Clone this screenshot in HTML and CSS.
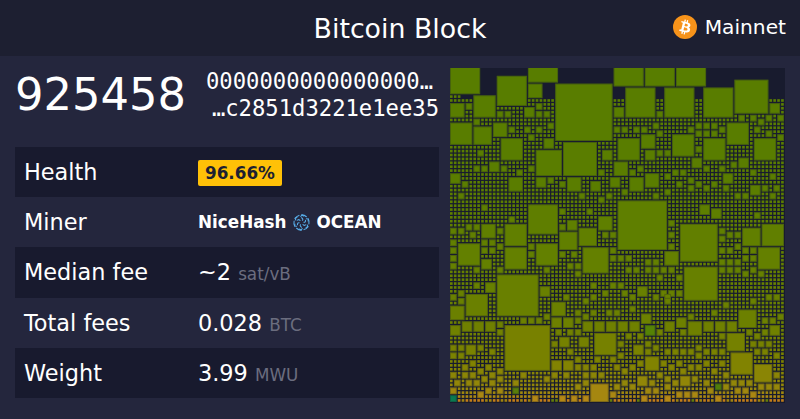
FILE: index.html
```html
<!DOCTYPE html>
<html lang="en">
<head>
<meta charset="utf-8">
<title>Bitcoin Block</title>
<link rel="stylesheet" href="styles.css">
</head>
<body>
<header class="top">
  <h1 class="title">Bitcoin Block</h1>
  <div class="network">
    <svg class="coin" viewBox="0 0 32 32" aria-hidden="true">
      <circle cx="16" cy="16" r="16" fill="#f7931a"/>
      <path fill="#fff" d="M23.189 14.02c.314-2.096-1.283-3.223-3.465-3.975l.708-2.84-1.728-.43-.69 2.765c-.454-.114-.92-.22-1.385-.326l.695-2.783L15.596 6l-.708 2.839c-.376-.086-.746-.17-1.104-.26l.002-.009-2.384-.595-.46 1.846s1.283.294 1.256.312c.7.175.826.638.805 1.006l-.806 3.235c.048.012.11.03.18.057l-.183-.045-1.13 4.532c-.086.212-.303.531-.793.41.018.025-1.256-.313-1.256-.313l-.858 1.978 2.25.561c.418.105.828.215 1.231.318l-.715 2.872 1.727.43.708-2.84c.472.127.93.245 1.378.357l-.706 2.828 1.728.43.715-2.866c2.948.558 5.164.333 6.097-2.333.752-2.146-.037-3.385-1.588-4.192 1.13-.26 1.98-1.003 2.207-2.538zm-3.95 5.538c-.533 2.147-4.148.986-5.32.695l.95-3.805c1.172.293 4.929.872 4.37 3.11zm.535-5.569c-.487 1.953-3.495.96-4.47.717l.86-3.45c.975.243 4.118.696 3.61 2.733z"/>
    </svg>
    <span>Mainnet</span>
  </div>
</header>
<main class="content">
  <section class="info">
    <div class="summary">
      <div class="height">925458</div>
      <div class="hash">
        <div class="hash-start">0000000000000000…</div>
        <div class="hash-end">…c2851d3221e1ee35</div>
      </div>
    </div>
    <div class="stats">
      <div class="row"><span class="label">Health</span><span class="value"><span class="badge">96.66%</span></span></div>
      <div class="row"><span class="label">Miner</span><span class="value miner">NiceHash
        <svg class="pool" viewBox="0 0 16 16" aria-hidden="true">
          <g fill="none" stroke="#58aeea" stroke-width="1" stroke-linecap="round">
            <g id="blade"><path d="M8.4 .8A7.2 7.2 0 0 1 12.6 2.6"/><path d="M8.4 .8 7.3 2.3M8.4 .8 9.9 1.9"/><path d="M8 3.6C9.4 4.3 9.5 5.2 8.9 5.9"/></g>
            <use href="#blade" transform="rotate(60 8 8)"/>
            <use href="#blade" transform="rotate(120 8 8)"/>
            <use href="#blade" transform="rotate(180 8 8)"/>
            <use href="#blade" transform="rotate(240 8 8)"/>
            <use href="#blade" transform="rotate(300 8 8)"/>
          </g>
        </svg>
        OCEAN</span></div>
      <div class="row"><span class="label">Median fee</span><span class="value">~2 <span class="unit">sat/vB</span></span></div>
      <div class="row"><span class="label">Total fees</span><span class="value">0.028 <span class="unit">BTC</span></span></div>
      <div class="row"><span class="label">Weight</span><span class="value">3.99 <span class="unit">MWU</span></span></div>
    </div>
  </section>
  <canvas class="treemap" id="treemap" width="335" height="335"></canvas>
</main>
<script src="treemap.js"></script>
</body>
</html>
```
FILE: styles.css
```css
* { box-sizing: border-box; }
html, body { margin: 0; height: 100%; }
body {
  background: #24263d;
  color: #fff;
  font-family: "DejaVu Sans", sans-serif;
  overflow: hidden;
}
.top {
  height: 56px;
  background: #1d1f31;
  display: flex;
  align-items: center;
  justify-content: center;
  position: relative;
}
.title {
  margin: 0;
  font-size: 26.8px;
  font-weight: 400;
}
.network {
  position: absolute;
  right: 14px;
  top: 15px;
  display: flex;
  align-items: center;
  gap: 8px;
  font-size: 20.2px;
}
.coin { width: 24px; height: 24px; display: block; }
.content {
  display: flex;
  padding: 12px 15px 0;
  gap: 11px;
}
.info { width: 424px; }
.summary {
  display: flex;
  justify-content: space-between;
  height: 79px;
}
.height {
  font-size: 44.8px;
  line-height: 54px;
}
.hash {
  width: 233px;
  font-family: "DejaVu Sans Mono", monospace;
  font-size: 22.2px;
  line-height: 27px;
}
.hash-start { text-align: left; }
.hash-end { text-align: right; }
.stats { display: flex; flex-direction: column; }
.row {
  height: 50.2px;
  display: flex;
  align-items: center;
  padding-left: 9px;
}
.row:nth-child(odd) { background: #181a2e; }
.label { width: 174px; font-size: 22.4px; }
.value { font-size: 22.4px; }
.unit { font-size: 16.8px; color: #6b6d7f; }
.badge {
  display: inline-block;
  background: #ffc107;
  color: #1d1f31;
  font-size: 16.8px;
  font-weight: 700;
  line-height: 26px;
  padding: 0 7px;
  border-radius: 2px;
}
.miner {
  font-size: 16.8px;
  font-weight: 700;
  display: flex;
  align-items: center;
  gap: 6.5px;
}
.pool { width: 17px; height: 17px; display: block; }
.treemap { width: 335px; height: 335px; display: block; background: #181b2e; }
```
FILE: treemap.js
```js
(function () {
  var GRID = 86;
  var canvas = document.getElementById('treemap');
  var ctx = canvas.getContext('2d');
  var pitch = canvas.width / GRID;

  // Large blocks as [column, row, size]; rows above zero are clipped by the canvas.
  var big = [
    [0,-1,8],[20,-4,8],[42,-3,8],[50,-3,8],[58,-3,8],[73,3,9],[45,5,8],[55,5,8],[65,5,8],[82,9,3],
    [12,2,8],[20,4,4],[27,4,15],[6,7,6],[0,9,4],[19,10,3],[0,14,6],[6,15,5],[11,14,4],[24,18,3],
    [13,18,6],[22,21,7],[29,19,9],[39,21,3],[43,18,6],[10,24,3],[0,27,3],[42,24,4],[42,10,3],
    [15,28,4],[22,28,3],[30,28,4],[36,29,3],[41,28,3],[20,35,8],[38,38,4],[43,34,13],[30,39,3],
    [8,40,4],[14,40,6],[28,42,5],[33,41,5],[2,45,6],[14,46,6],[22,45,6],[34,46,7],[8,49,3],
    [12,53,11],[23,56,3],[9,55,3],[4,58,6],[0,61,4],[46,28,4],[50,27,4],[70,27,3],[64,35,3],
    [67,36,3],[77,30,3],[59,40,10],[75,41,5],[80,40,6],[79,46,6],[55,47,4],[60,51,9],[48,56,3],
    [71,14,6],[49,17,4],[57,17,6],[50,21,3],[65,18,6],[78,18,6],[62,23,3],[74,23,3],
    [74,62,5],[49,63,3],[58,64,3],[43,65,3],[46,65,3],[55,65,3],[61,65,4],[65,65,3],[68,65,3],
    [71,65,3],[82,66,3],[50,66,3],[71,68,5],[47,71,3],[72,73,6],[50,74,4],[78,76,5],[48,79,3],
    [59,79,3],[26,60,4],[26,64,3],[29,64,3],[34,65,3],[37,65,3],[40,65,3],[0,66,3],[3,65,3],
    [6,65,3],[9,65,3],[14,66,12],[28,69,3],[33,69,3],[37,68,6],[4,71,3],[26,75,3],[29,75,3],
    [36,81,5]
  ];

  // Two-cell blocks as column,row pairs.
  var small = [
    [4,9],[12,11],[14,11],[22,9],[22,11],[24,11],[6,13],[15,15],[19,15],[22,15],[25,14],[20,17],
    [7,21],[6,25],[8,25],[13,25],[20,25],[17,26],[38,26],[42,15],[44,15],[53,11],[74,12],[77,12],
    [79,13],[81,12],[84,12],[52,14],[47,15],[49,15],[53,16],[61,15],[63,14],[65,14],[67,14],[63,16],
    [65,16],[67,16],[69,15],[78,15],[81,16],[84,17],[53,21],[55,21],[63,20],[46,26],[48,25],[57,26],
    [59,26],[65,25],[69,25],[72,24],[77,26],[55,27],[82,27],
    [3,29],[25,28],[28,29],[2,32],[33,32],[40,32],[44,31],[38,33],[8,35],[28,36],[35,36],[15,38],
    [28,40],[0,41],[2,41],[4,40],[6,40],[12,41],[5,42],[39,42],[41,42],[0,44],[8,44],[10,44],[12,45],
    [0,46],[8,46],[10,46],[20,45],[20,47],[28,47],[31,47],[41,46],[41,48],[43,48],[0,48],[0,50],
    [30,50],[32,50],[32,52],[6,51],[12,51],[24,51],[6,55],[36,55],[41,55],[43,55],[39,57],[2,57],
    [36,58],[29,58],[0,58],[2,59],
    [52,32],[55,31],[58,29],[61,28],[61,30],[63,29],[65,30],[67,29],[70,30],[73,32],[75,32],[80,30],
    [82,32],[83,30],[78,37],[56,39],[56,42],[56,45],[69,41],[69,43],[69,46],[71,42],[73,42],[71,46],
    [73,45],[75,46],[77,46],[75,48],[77,48],[45,48],[50,49],[52,49],[69,49],[71,49],[73,49],[45,51],
    [47,51],[50,51],[52,51],[54,51],[56,51],[69,51],[71,51],[73,51],[75,52],[77,51],[79,52],[53,53],
    [58,53],[54,57],[56,57],[58,57],[44,57],[46,58],[52,58],[55,58],[81,58],[83,58],
    [55,59],[70,60],[77,59],[46,61],[67,62],[61,63],[84,63],[80,64],[82,64],[53,67],[59,67],[76,67],
    [80,67],[78,68],[45,68],[48,68],[69,68],[43,70],[50,70],[63,71],[77,70],[79,70],[81,70],[52,71],
    [50,72],[55,72],[57,72],[59,72],[61,72],[65,72],[67,72],[69,72],[78,72],[80,72],[43,73],[63,73],
    [83,73],[48,75],[54,75],[58,75],[65,75],[69,75],[44,77],[46,76],[56,76],[61,76],[63,76],[59,77],
    [67,77],[70,78],[53,78],[83,78],[55,79],[62,79],[65,80],[44,80],[51,80],[57,80],[72,80],[74,80],
    [76,80],[55,81],[70,81],[46,81],[79,81],[81,81],[83,81],[68,81],[50,82],[52,82],[66,82],[73,82],
    [75,82],[77,83],[58,83],[60,83],[62,83],[49,84],[55,84],[68,84],
    [18,64],[20,64],[22,64],[24,63],[32,62],[32,64],[34,59],[34,63],[36,62],[40,62],[42,62],[12,65],
    [12,67],[27,67],[30,67],[32,67],[26,70],[0,71],[2,71],[7,71],[10,72],[30,72],[0,73],[2,73],[5,75],
    [32,74],[32,76],[34,76],[36,76],[37,74],[41,74],[42,76],[3,76],[7,77],[9,76],[12,77],[0,78],[3,78],
    [5,78],[10,78],[18,78],[24,79],[26,78],[29,78],[34,78],[36,78],[38,78],[8,79],[12,79],[1,80],[4,80],
    [6,80],[10,80],[16,80],[34,80],[32,81],[42,81],[0,82],[9,82],[12,82],[16,82],[7,83],[41,83],[0,84],
    [21,84],[28,84],[31,84],[34,84]
  ];

  var special = { '0,84': 'rgb(10,122,80)', '16,82': 'rgb(88,125,10)', '50,66': 'rgb(85,130,5)', '68,81': 'rgb(80,125,10)' };

  var stops = [[0, 88, 125, 0], [30, 90, 125, 0], [50, 100, 128, 0], [65, 108, 128, 0],
               [75, 125, 130, 0], [82, 150, 135, 10], [86, 190, 135, 25]];

  function colorAt(row) {
    for (var i = 1; i < stops.length; i++) {
      if (row <= stops[i][0]) {
        var a = stops[i - 1], b = stops[i], t = Math.max(0, (row - a[0]) / (b[0] - a[0]));
        return 'rgb(' + [1, 2, 3].map(function (k) { return Math.round(a[k] + (b[k] - a[k]) * t); }).join(',') + ')';
      }
    }
    return 'rgb(190,135,25)';
  }

  var used = [];
  for (var i = 0; i < GRID * GRID; i++) used.push(false);

  function block(col, row, size) {
    var fill = special[col + ',' + row] || colorAt(row + size / 2);
    var x = col * pitch, y = row * pitch, s = size * pitch - 1;
    ctx.fillStyle = fill;
    ctx.fillRect(x, y, s, s);
    ctx.strokeStyle = 'rgba(24,27,46,.28)';
    ctx.lineWidth = 1;
    ctx.strokeRect(x + 0.5, y + 0.5, s - 1, s - 1);
    for (var r = Math.max(row, 0); r < row + size; r++) {
      for (var c = col; c < col + size; c++) used[r * GRID + c] = true;
    }
  }

  big.forEach(function (b) { block(b[0], b[1], b[2]); });
  small.forEach(function (b) { block(b[0], b[1], 2); });

  var seed = 7;
  function rand() { seed = (seed * 9301 + 49297) % 233280; return seed / 233280; }

  for (var r = 0; r < GRID; r++) {
    for (var c = 0; c < GRID; c++) {
      var top = c < 3 ? 7 : 8;
      if (r < top || used[r * GRID + c]) continue;
      ctx.fillStyle = colorAt(r);
      if (r >= 85) {
        var v = rand();
        ctx.fillStyle = v < 0.55 ? 'rgb(195,125,25)' : v < 0.9 ? 'rgb(160,130,15)' : 'rgb(100,125,10)';
      }
      ctx.fillRect(c * pitch, r * pitch, pitch - 1.25, pitch - 1.25);
    }
  }
})();
```
